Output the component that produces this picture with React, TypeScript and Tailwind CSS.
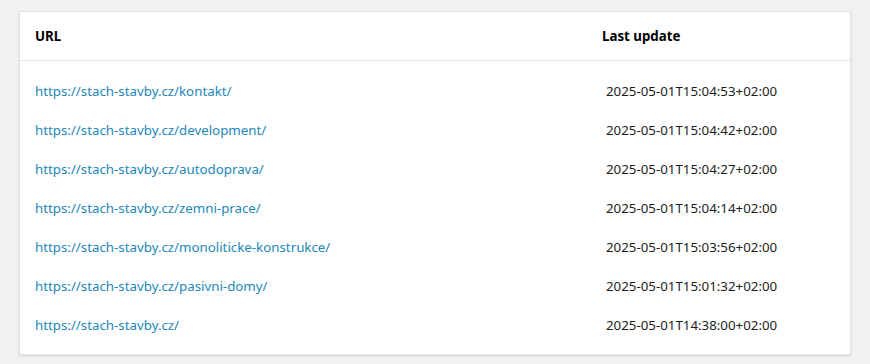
const rows = [
  { url: "https://stach-stavby.cz/kontakt/", updated: "2025-05-01T15:04:53+02:00" },
  { url: "https://stach-stavby.cz/development/", updated: "2025-05-01T15:04:42+02:00" },
  { url: "https://stach-stavby.cz/autodoprava/", updated: "2025-05-01T15:04:27+02:00" },
  { url: "https://stach-stavby.cz/zemni-prace/", updated: "2025-05-01T15:04:14+02:00" },
  { url: "https://stach-stavby.cz/monoliticke-konstrukce/", updated: "2025-05-01T15:03:56+02:00" },
  { url: "https://stach-stavby.cz/pasivni-domy/", updated: "2025-05-01T15:01:32+02:00" },
  { url: "https://stach-stavby.cz/", updated: "2025-05-01T14:38:00+02:00" },
];

export default function App() {
  return (
    <div className="min-h-screen bg-[#f1f1f1] pt-[11px] pl-[19px] pr-[19px] font-['Noto_Sans',sans-serif] text-[13.3px]">
      <div className="w-[832px] bg-white border border-[#e2e2e2] shadow-[0_1px_2px_rgba(0,0,0,0.12)]">
        <div className="flex h-[49px] items-center pt-[1px] border-b border-[#e5e5e5] font-bold text-black">
          <div className="w-[582px] pl-[15px]">URL</div>
          <div>Last update</div>
        </div>
        <div className="pt-[11px] pb-[9px]">
          {rows.map((row) => (
            <div key={row.url} className="flex h-[39px] items-center">
              <a href={row.url} className="w-[586px] pl-[15px] text-[#1c87b9]">
                {row.url}
              </a>
              <div className="text-[#1d1d1d]">{row.updated}</div>
            </div>
          ))}
        </div>
      </div>
    </div>
  );
}
